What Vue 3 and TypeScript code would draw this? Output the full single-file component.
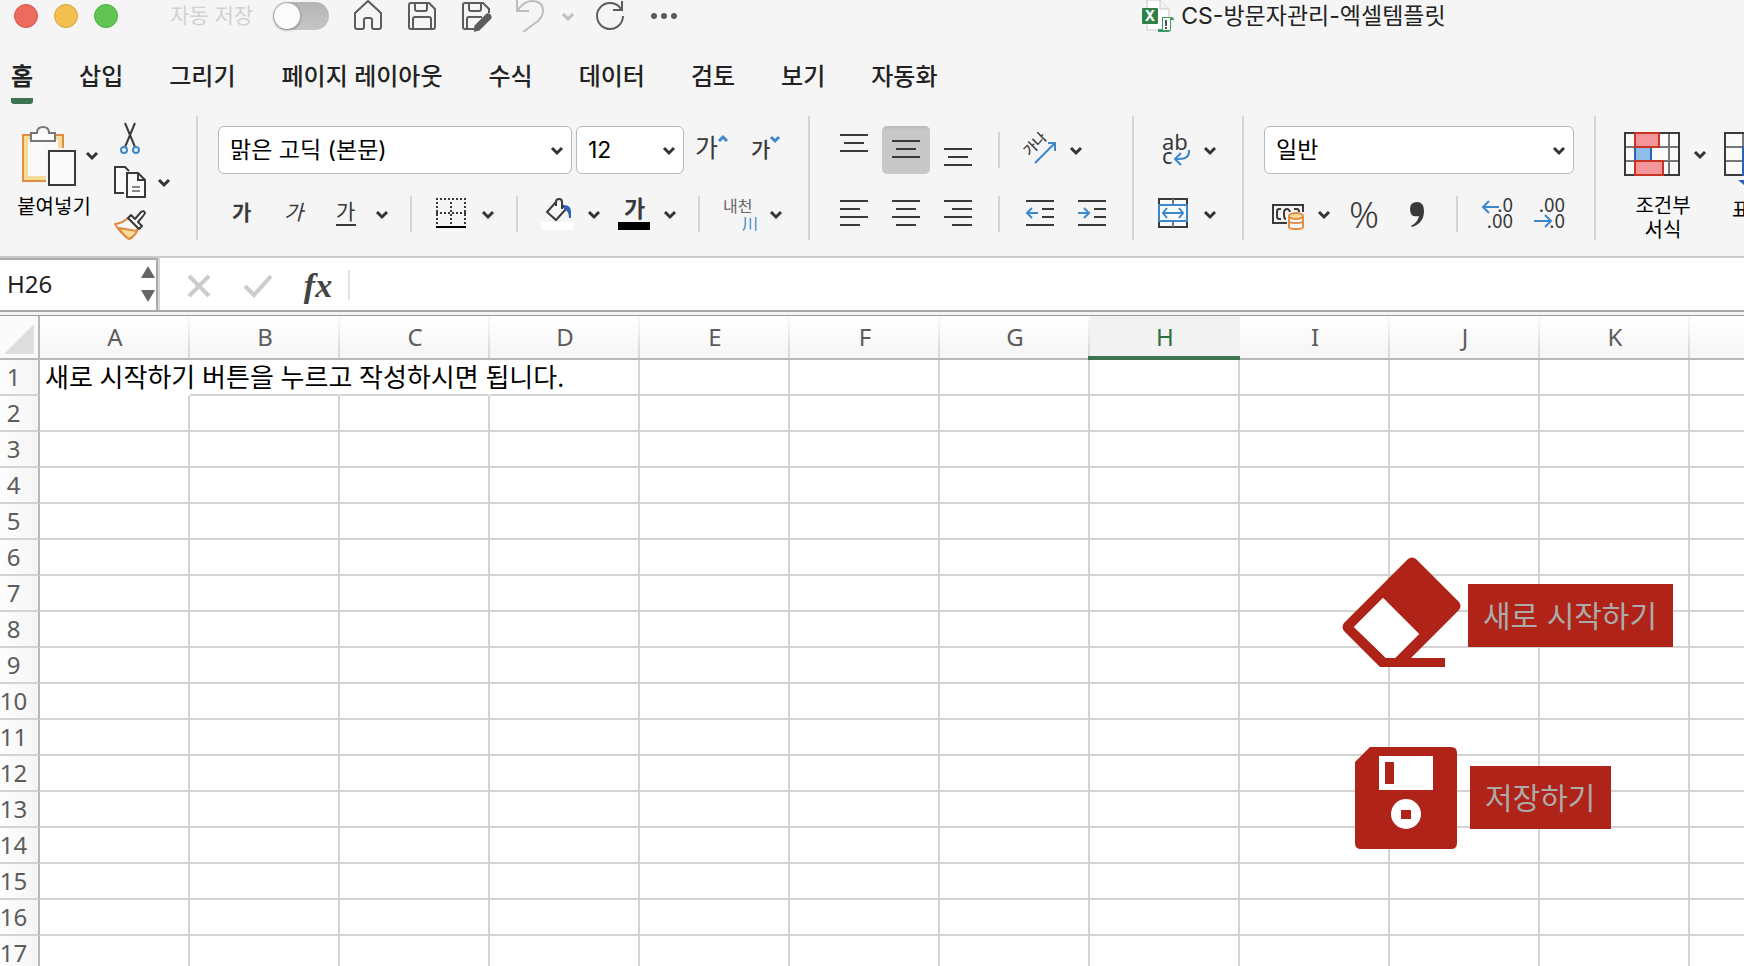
<script setup lang="ts">
import { ref } from 'vue'

interface Column {
  id: number
  label: string
}

const tabs = ['홈', '삽입', '그리기', '페이지 레이아웃', '수식', '데이터', '검토', '보기', '자동화']
const activeTab = ref('홈')
const autoSave = ref(false)
const font = ref('맑은 고딕 (본문)')
const fontSize = ref('12')
const numberFormat = ref('일반')
const cellName = ref('H26')
const formula = ref('')

const columns: Column[] = [...'ABCDEFGHIJK', ''].map((label, id) => ({ id, label }))
const rowCount = 17
const selectedColumn = 'H'
const firstCell = '새로 시작하기 버튼을 누르고 작성하시면 됩니다.'
</script>

<template>
  <div class="app">
    <header class="titlebar">
      <div class="title-tools">
        <div class="lights">
          <button class="light red" aria-label="닫기"></button>
          <button class="light yellow" aria-label="최소화"></button>
          <button class="light green" aria-label="확대"></button>
        </div>
        <label class="autosave">
          <span>자동 저장</span>
          <input v-model="autoSave" type="checkbox" class="toggle" />
        </label>
        <div class="quick">
          <button class="quick-btn" aria-label="홈 화면">
            <svg viewBox="0 0 32 32"><path d="M3 13 16 1l13 12v14q0 2-2 2h-5q-2 0-2-2v-7q0-2-2-2h-4q-2 0-2 2v7q0 2-2 2H5q-2 0-2-2z" /></svg>
          </button>
          <button class="quick-btn" aria-label="저장">
            <svg viewBox="0 0 32 32"><path d="M5 3h18l6 6v18q0 2-2 2H5q-2 0-2-2V5q0-2 2-2zM9 3v6q0 2 2 2h8q2 0 2-2V3M7 29V19q0-2 2-2h14q2 0 2 2v10" /></svg>
          </button>
          <button class="quick-btn" aria-label="다른 이름으로 저장">
            <svg viewBox="0 0 32 32">
              <path d="M15 29H5q-2 0-2-2V5q0-2 2-2h18l6 6v4M9 3v6q0 2 2 2h8q2 0 2-2V3M7 29V19q0-2 2-2h13" />
              <path d="M28 17 18 27" stroke-width="7" stroke-linecap="round" /><path d="m14 32 1-7 5 5z" class="solid" />
            </svg>
          </button>
          <div class="undo">
            <button class="quick-btn faded" aria-label="실행 취소">
              <svg viewBox="0 0 32 32"><path d="M3 0v11h12M3 11Q10 1 18 1q11 0 11 10 0 5-5 10L9 32" /></svg>
            </button>
            <button class="quick-more faded" aria-label="실행 취소 목록">
              <svg viewBox="0 0 16 32"><path d="m3 14 5 5 5-5" stroke-width="3" /></svg>
            </button>
          </div>
          <button class="quick-btn" aria-label="다시 실행">
            <svg viewBox="0 0 32 32"><path d="M27 9A13 13 0 1 0 29 16M28 1v9h-9" /></svg>
          </button>
          <button class="quick-btn" aria-label="더 보기">
            <svg viewBox="0 0 32 32"><g class="solid"><circle cx="6" cy="16" r="3" /><circle cx="16" cy="16" r="3" /><circle cx="26" cy="16" r="3" /></g></svg>
          </button>
        </div>
      </div>
      <h1 class="doc-title">
        <svg class="doc-icon" viewBox="0 0 32 32" aria-hidden="true">
          <path d="M5 0h13l9 9v21H5z" fill="#fff" stroke="#c9c9c9" />
          <path d="M18 0v9h9" fill="#f2f2f2" stroke="#c9c9c9" />
          <rect y="8" width="16" height="16" rx="1" fill="#2f8149" />
          <text x="8" y="21" text-anchor="middle" class="doc-x">X</text>
          <path d="M20 17h9q3 0 3 3h-3v9q0 3-3 3H16v-3h4z" fill="#3c9a62" />
          <path d="M21 18h7v12h-7z" fill="#fff" /><path d="M24 20v6M24 27v2" stroke="#555" stroke-width="2" />
        </svg>
        CS-방문자관리-엑셀템플릿
      </h1>
    </header>

    <nav class="tabs">
      <button v-for="tab in tabs" :key="tab" class="tab" :class="{ active: tab === activeTab }" @click="activeTab = tab">{{ tab }}</button>
    </nav>

    <section class="ribbon">
      <div class="group clipboard">
        <div class="paste">
          <div class="big-icon">
            <button class="plain" aria-labelledby="paste-label">
              <svg width="60" height="66" viewBox="0 0 60 66">
                <path d="M3 11h40v46H3z" fill="#fafafa" stroke="#e08c42" stroke-width="2" />
                <path d="M6 14h34v40H6z" fill="none" stroke="#f5dd99" stroke-width="4" />
                <path d="M26 24h34v42H26z" fill="#f5f5f5" />
                <path d="M11 9h6q0-6 6-6t6 6h6v8H11z" fill="#fafafa" stroke="#777" stroke-width="2" />
                <path d="M29 27h26v34H29z" fill="#fafafa" stroke="#3a3a3a" stroke-width="2" />
              </svg>
            </button>
            <button class="more short" aria-label="붙여넣기 옵션"><svg viewBox="0 0 24 48"><path d="m7 20 5 5 5-5" /></svg></button>
          </div>
          <span id="paste-label" class="caption">붙여넣기</span>
        </div>
        <div class="clip-tools">
          <button class="plain" aria-label="잘라내기">
            <svg width="32" height="32" viewBox="0 0 32 32" fill="none">
              <path d="m11 1 10 24M21 1 11 25" stroke="#3a3a3a" stroke-width="2" />
              <circle cx="10" cy="28" r="3" stroke="#3d88cd" stroke-width="2" /><circle cx="22" cy="28" r="3" stroke="#3d88cd" stroke-width="2" />
            </svg>
          </button>
          <div class="copy">
            <button class="plain" aria-label="복사">
              <svg width="32" height="32" viewBox="0 0 32 32" fill="none" stroke="#3a3a3a" stroke-width="2">
                <path d="M10 27H1V1h10l4 4" fill="#fafafa" /><path d="M13 7h11l7 7v17H13z" fill="#fafafa" /><path d="M24 7v7h7" />
                <path d="M18 21h8M18 25h8" stroke="#888" />
              </svg>
            </button>
            <button class="more short" aria-label="복사 옵션"><svg viewBox="0 0 24 48"><path d="m7 22 5 5 5-5" /></svg></button>
          </div>
          <button class="plain" aria-label="서식 복사">
            <svg width="32" height="32" viewBox="0 0 32 32" fill="none" stroke-linejoin="round">
              <path d="M1 14Q9 13 14 8l10 10q-2 7-9 11Q7 24 1 14z" fill="#fafafa" stroke="#e08c42" stroke-width="2" />
              <path d="m5 18 18 3q-3 6-8 8-6-4-10-11z" fill="#f5dd99" stroke="#e08c42" stroke-width="2" />
              <path d="m14 8 3-3 4 4 6-7q3-2 4 1 0 1-7 9l4 4-3 3z" fill="#fafafa" stroke="#3a3a3a" stroke-width="2" />
            </svg>
          </button>
        </div>
      </div>

      <div class="group rows">
        <div class="row">
          <label class="select font-select">
            <select v-model="font" aria-label="글꼴"><option>맑은 고딕 (본문)</option></select>
            <svg viewBox="0 0 24 48"><path d="m7 22 5 5 5-5" /></svg>
          </label>
          <label class="select size-select">
            <select v-model="fontSize" aria-label="글꼴 크기"><option>12</option></select>
            <svg viewBox="0 0 24 48"><path d="m7 22 5 5 5-5" /></svg>
          </label>
          <button class="tool" aria-label="글꼴 크게">
            <svg viewBox="0 0 48 48"><text x="7" y="31" class="g24">가</text><path class="blue thick" d="m31 15 4-4 4 4" /></svg>
          </button>
          <button class="tool" aria-label="글꼴 작게">
            <svg viewBox="0 0 48 48"><text x="11" y="31" class="g20 medium">가</text><path class="blue thick" d="m31 11 4 4 4-4" /></svg>
          </button>
        </div>
        <div class="row">
          <button class="tool" aria-label="굵게"><svg viewBox="0 0 48 48"><text x="14" y="30" class="g20 bold">가</text></svg></button>
          <button class="tool" aria-label="기울임꼴"><svg viewBox="0 0 48 48"><text x="14" y="30" class="g20 italic">가</text></svg></button>
          <div class="split">
            <button class="tool" aria-label="밑줄"><svg viewBox="0 0 48 48"><text x="14" y="29" class="g20">가</text><path class="ink" d="M14 35h20" /></svg></button>
            <button class="more" aria-label="밑줄 옵션"><svg viewBox="0 0 24 48"><path d="m7 22 5 5 5-5" /></svg></button>
          </div>
          <i class="sep"></i>
          <div class="split">
            <button class="tool" aria-label="테두리">
              <svg viewBox="0 0 48 48"><path class="ink" stroke-dasharray="2 2" d="M8 9h30M8 23h30M9 12v24M23 12v24M37 12v24" /><path d="M8 37h30" stroke="#000" stroke-width="2" /></svg>
            </button>
            <button class="more" aria-label="테두리 옵션"><svg viewBox="0 0 24 48"><path d="m7 22 5 5 5-5" /></svg></button>
          </div>
          <i class="sep"></i>
          <div class="split">
            <button class="tool" aria-label="채우기 색">
              <svg viewBox="0 0 48 48">
                <path d="M8 32h32v8H8z" fill="#fff" /><path class="ink" d="M22 12 13 22l9 8 10-11-4-4M22 16v-4q0-3 3-3t3 3v7" />
                <path d="M30 15q7 0 7 7v6h-2q0-7-5-9z" fill="#2a63b4" />
              </svg>
            </button>
            <button class="more" aria-label="채우기 색 옵션"><svg viewBox="0 0 24 48"><path d="m7 22 5 5 5-5" /></svg></button>
          </div>
          <div class="split">
            <button class="tool" aria-label="글꼴 색"><svg viewBox="0 0 48 48"><path d="M8 32h32v8H8z" /><text x="14" y="27" class="g22 bold">가</text></svg></button>
            <button class="more" aria-label="글꼴 색 옵션"><svg viewBox="0 0 24 48"><path d="m7 22 5 5 5-5" /></svg></button>
          </div>
          <i class="sep"></i>
          <div class="split">
            <button class="tool" aria-label="윗주">
              <svg viewBox="0 0 48 48"><text x="7" y="22" class="g16 soft">내천</text><text x="26" y="39" class="g16 blue-text">川</text></svg>
            </button>
            <button class="more" aria-label="윗주 옵션"><svg viewBox="0 0 24 48"><path d="m7 22 5 5 5-5" /></svg></button>
          </div>
        </div>
      </div>

      <div class="group rows align">
        <div class="row">
          <button class="tool" aria-label="위쪽 맞춤"><svg viewBox="0 0 48 48"><path class="ink" d="M10 9h28M14 17h20M10 25h28" /></svg></button>
          <button class="tool pressed" aria-label="가운데 맞춤" aria-pressed="true"><svg viewBox="0 0 48 48"><path class="ink" d="M10 15h28M14 23h20M10 31h28" /></svg></button>
          <button class="tool" aria-label="아래쪽 맞춤"><svg viewBox="0 0 48 48"><path class="ink" d="M10 23h28M14 31h20M10 39h28" /></svg></button>
          <i class="sep"></i>
          <div class="split">
            <button class="tool" aria-label="방향">
              <svg viewBox="0 0 48 48"><text x="19" y="23" text-anchor="middle" class="g14 medium" transform="rotate(-45 19 18)">가나</text><path class="blue" d="m19 37 20-20M32 17h7v8" /></svg>
            </button>
            <button class="more" aria-label="방향 옵션"><svg viewBox="0 0 24 48"><path d="m7 22 5 5 5-5" /></svg></button>
          </div>
        </div>
        <div class="row">
          <button class="tool" aria-label="왼쪽 맞춤"><svg viewBox="0 0 48 48"><path class="ink" d="M10 11h28M10 19h20M10 27h28M10 35h20" /></svg></button>
          <button class="tool" aria-label="텍스트 가운데 맞춤"><svg viewBox="0 0 48 48"><path class="ink" d="M10 11h28M14 19h20M10 27h28M14 35h20" /></svg></button>
          <button class="tool" aria-label="오른쪽 맞춤"><svg viewBox="0 0 48 48"><path class="ink" d="M10 11h28M18 19h20M10 27h28M18 35h20" /></svg></button>
          <i class="sep"></i>
          <button class="tool" aria-label="내어쓰기"><svg viewBox="0 0 48 48"><path class="ink" d="M10 11h28M26 19h12M26 27h12M10 35h28" /><path class="blue" d="M11 23h11M16 18l-5 5 5 5" /></svg></button>
          <button class="tool" aria-label="들여쓰기"><svg viewBox="0 0 48 48"><path class="ink" d="M10 11h28M26 19h12M26 27h12M10 35h28" /><path class="blue" d="M10 23h11M16 18l5 5-5 5" /></svg></button>
        </div>
      </div>

      <div class="group rows wrap">
        <div class="row">
          <div class="split">
            <button class="tool" aria-label="텍스트 줄 바꿈">
              <svg viewBox="0 0 48 48"><text x="12" y="24" class="latin">ab</text><text x="12" y="38" class="latin">c</text><path class="blue" d="M39 24q1 9-10 9h-4M31 27l-6 6 6 6" /></svg>
            </button>
            <button class="more" aria-label="줄 바꿈 옵션"><svg viewBox="0 0 24 48"><path d="m7 22 5 5 5-5" /></svg></button>
          </div>
        </div>
        <div class="row">
          <div class="split">
            <button class="tool" aria-label="병합하고 가운데 맞춤">
              <svg viewBox="0 0 48 48">
                <path d="M9 9h28v28H9z" fill="#fafafa" stroke="#3a3a3a" stroke-width="2" /><path d="M23 9v28" stroke="#777" stroke-width="2" />
                <path d="M9 15h28v16H9z" fill="#fafafa" stroke="#3d88cd" stroke-width="2" /><path class="blue" d="M13 23h20M17 18l-4 5 4 5M29 18l4 5-4 5" />
              </svg>
            </button>
            <button class="more" aria-label="병합 옵션"><svg viewBox="0 0 24 48"><path d="m7 22 5 5 5-5" /></svg></button>
          </div>
        </div>
      </div>

      <div class="group rows">
        <div class="row">
          <label class="select number-select">
            <select v-model="numberFormat" aria-label="표시 형식"><option>일반</option></select>
            <svg viewBox="0 0 24 48"><path d="m7 22 5 5 5-5" /></svg>
          </label>
        </div>
        <div class="row">
          <div class="split">
            <button class="tool" aria-label="통화 형식">
              <svg viewBox="0 0 48 48">
                <path class="ink" d="M9 15h30v18H9z" /><path class="ink" d="M17 19h-2q-2 0-2 3v4q0 3 2 3h2M22 29q-2 0-2-4v-2q0-4 3-4 2 0 3 3M30 19h3q2 0 2 3" />
                <path d="M23 22h19v20H23z" fill="#f5f5f5" />
                <path d="M25 26v11q0 2 7 2t7-2V26" fill="#fafafa" stroke="#e08c42" stroke-width="2" /><ellipse cx="32" cy="26" rx="7" ry="3" fill="#f5dd99" stroke="#e08c42" stroke-width="2" />
                <path d="M25 31q0 2 7 2t7-2" fill="none" stroke="#e08c42" stroke-width="2" />
              </svg>
            </button>
            <button class="more" aria-label="통화 옵션"><svg viewBox="0 0 24 48"><path d="m7 22 5 5 5-5" /></svg></button>
          </div>
          <button class="tool" aria-label="백분율"><svg viewBox="0 0 48 48"><text x="24" y="38" text-anchor="middle" class="percent">%</text></svg></button>
          <button class="tool" aria-label="쉼표 스타일">
            <svg viewBox="0 0 48 48"><path d="M25 12q7 0 7 9 0 12-12 16l-1-1q7-4 8-10-9 2-9-7 0-7 7-7z" fill="#3a3a3a" /></svg>
          </button>
          <i class="sep"></i>
          <button class="tool" aria-label="자릿수 늘림">
            <svg viewBox="0 0 48 48"><text x="39" y="22" text-anchor="end" class="digits">.0</text><text x="39" y="38" text-anchor="end" class="digits">.00</text><path class="blue" d="M9 17h16M15 11l-6 6 6 6" /></svg>
          </button>
          <button class="tool" aria-label="자릿수 줄임">
            <svg viewBox="0 0 48 48"><text x="39" y="22" text-anchor="end" class="digits">.00</text><text x="39" y="38" text-anchor="end" class="digits">.0</text><path class="blue" d="M8 31h17M19 25l6 6-6 6" /></svg>
          </button>
        </div>
      </div>

      <div class="group styles">
        <div class="style-item">
          <div class="big-icon">
            <button class="plain" aria-labelledby="cond-label">
              <svg width="56" height="54" viewBox="0 0 56 54">
                <path d="M1 1h54v42H1z" fill="#fafafa" /><path d="M1 15h54M1 29h54M11 1v42M45 1v42" stroke="#777" stroke-width="2" />
                <path d="M1 1h54v42H1z" fill="none" stroke="#3a3a3a" stroke-width="2" />
                <path d="M11 15h16v14H11z" fill="#8fbce8" /><path d="M11 15v14M27 15v14" stroke="#2a63b4" stroke-width="2" />
                <path d="M11 1h24v14H11zM11 29h28v14H11z" fill="#f3959a" stroke="#c93423" stroke-width="2" />
              </svg>
            </button>
            <button class="more short" aria-label="조건부 서식 옵션"><svg viewBox="0 0 24 48"><path d="m7 22 5 5 5-5" /></svg></button>
          </div>
          <span id="cond-label" class="caption">조건부<br />서식</span>
        </div>
        <div class="style-item">
          <button class="plain" aria-labelledby="table-label">
            <svg width="56" height="54" viewBox="0 0 56 54">
              <path d="M1 1h54v42H1z" fill="#fafafa" /><path d="M1 15h54M1 29h54M19 1v42" stroke="#777" stroke-width="2" />
              <path d="M1 1h54v42H1z" fill="none" stroke="#3a3a3a" stroke-width="2" /><path d="M19 15h36v28H19z" fill="#8fbce8" stroke="#2a63b4" stroke-width="2" />
              <path d="M14 48h12v5h-6z" fill="#2a63b4" />
            </svg>
          </button>
          <span id="table-label" class="caption indent">표</span>
        </div>
      </div>
    </section>

    <section class="formula-bar">
      <div class="name-box">
        <input v-model="cellName" aria-label="이름 상자" />
        <svg width="16" height="36" viewBox="0 0 16 36" aria-hidden="true"><path d="m8 0 7 12H1zM8 36l7-12H1z" fill="#666" /></svg>
      </div>
      <div class="formula-actions">
        <button class="plain" aria-label="취소"><svg width="30" height="30" viewBox="0 0 30 30"><path d="m5 6 20 20M25 6 5 26" stroke="#ccc" stroke-width="4" /></svg></button>
        <button class="plain" aria-label="입력"><svg width="30" height="30" viewBox="0 0 30 30"><path d="m3 16 9 9L29 6" fill="none" stroke="#ccc" stroke-width="4" /></svg></button>
        <button class="plain fx" aria-label="함수 삽입">fx</button>
      </div>
      <input v-model="formula" class="formula-input" aria-label="수식 입력줄" />
    </section>

    <main class="sheet">
      <table>
        <colgroup>
          <col class="row-col" />
          <col v-for="c in columns" :key="c.id" :class="{ cell: c.label }" />
        </colgroup>
        <thead>
          <tr>
            <th class="corner"><svg width="30" height="30" viewBox="0 0 30 30" aria-hidden="true"><path d="M30 0v30H0z" fill="#dedede" /></svg></th>
            <th v-for="c in columns" :key="c.id" scope="col" :class="{ selected: c.label === selectedColumn }">{{ c.label }}</th>
          </tr>
        </thead>
        <tbody>
          <tr v-for="r in rowCount" :key="r">
            <th scope="row"><span>{{ r }}</span></th>
            <td v-for="c in columns" :key="c.id" :class="{ spill: r === 1 && c.id < 3, first: r === 1 && c.id === 0 }">
              <template v-if="r === 1 && c.id === 0">{{ firstCell }}</template>
            </td>
          </tr>
        </tbody>
      </table>
      <svg class="shape eraser" viewBox="0 0 120 112" aria-hidden="true">
        <path fill="#af2318" fill-rule="evenodd" d="M66 2q4-3 8 0l43 43q3 4 0 8L69 101h34v9H38L2 74q-3-4 0-8zM41 41 12 70l32 31h9l24-24z" />
        <path fill="#fff" d="m41 41-29 29 32 31h9l24-24z" />
      </svg>
      <button class="shape macro restart">새로 시작하기</button>
      <svg class="shape floppy" viewBox="0 0 102 102" aria-hidden="true">
        <path fill="#af2318" d="M15 0h81q6 0 6 6v90q0 6-6 6H6q-6 0-6-6V15z" />
        <path fill="#fff" d="M24 9h54v34H24z" /><path fill="#af2318" d="M30 15h9v22h-9z" />
        <circle cx="51" cy="67" r="15" fill="#fff" /><path fill="#af2318" d="M46 63h10v9H46z" />
      </svg>
      <button class="shape macro save">저장하기</button>
    </main>
  </div>
</template>

<style>
body {
  margin: 0;
  background: #f5f5f5;
}
</style>

<style scoped>
* {
  box-sizing: border-box;
}
.app {
  height: 100vh;
  overflow: hidden;
  display: flex;
  flex-direction: column;
  background: #f5f5f5;
  color: #222;
  font-family: Inter, 'Noto Sans CJK KR', sans-serif;
}
button,
input,
select {
  font: inherit;
  color: inherit;
  border: 0;
  margin: 0;
  padding: 0;
  background: none;
}
svg {
  display: block;
}

/* Title bar */
.titlebar {
  display: flex;
  height: 32px;
  align-items: center;
}
.title-tools {
  flex: 0 0 65.5%;
  display: flex;
  align-items: center;
  padding-left: 14px;
}
.lights {
  display: flex;
  gap: 16px;
  margin-right: 52px;
}
.light {
  width: 24px;
  height: 24px;
  border-radius: 50%;
}
.red {
  background: #ec6a5e;
  border: 1px solid #d5574c;
}
.yellow {
  background: #f4bf4f;
  border: 1px solid #d8a23c;
}
.green {
  background: #61c554;
  border: 1px solid #4fa943;
}
.autosave {
  display: flex;
  align-items: center;
  gap: 20px;
  font-size: 21px;
  line-height: 28px;
  color: #d2d2d2;
  white-space: nowrap;
}
.toggle {
  appearance: none;
  width: 56px;
  height: 28px;
  border-radius: 14px;
  background: linear-gradient(#b4b4b4, #c6c6c6);
}
.toggle::before {
  content: '';
  display: block;
  width: 26px;
  height: 26px;
  margin: 1px;
  border-radius: 50%;
  background: #fbfbfb;
  box-shadow: 0 1px 3px rgba(0, 0, 0, 0.4);
}
.quick {
  display: flex;
  align-items: center;
  gap: 22px;
  margin-left: 23px;
}
.quick-btn {
  width: 32px;
  height: 32px;
}
.quick-more {
  width: 16px;
  height: 32px;
}
.undo {
  display: flex;
  gap: 14px;
  margin-right: -4px;
}
.quick svg {
  fill: none;
  stroke: #5c5c5c;
  stroke-width: 2;
}
.quick .faded svg {
  stroke: #bdbdbd;
}
.quick .solid {
  fill: #5c5c5c;
  stroke: none;
}
.doc-title {
  display: flex;
  align-items: center;
  gap: 7px;
  margin: 0;
  font-size: 23px;
  line-height: 32px;
  font-weight: 400;
  white-space: nowrap;
}
.doc-icon {
  width: 32px;
  height: 32px;
}
.doc-x {
  font: bold 14px Inter, sans-serif;
  fill: #fff;
}

/* Tabs */
.tabs {
  display: flex;
  gap: 46px;
  padding: 24px 11px 0;
}
.tab {
  height: 48px;
  padding-bottom: 0;
  border-bottom: 6px solid transparent;
  font-size: 24px;
  line-height: 34px;
  font-weight: 500;
  white-space: nowrap;
}
.tab.active {
  font-weight: 700;
  background: linear-gradient(#3c7350, #3c7350) bottom / 100% 6px no-repeat border-box;
  border-radius: 3px;
}

/* Ribbon */
.ribbon {
  display: flex;
  flex-shrink: 0;
  padding: 12px 0 16px;
  border-bottom: 2px solid #cacaca;
  overflow: hidden;
}
.group {
  flex-shrink: 0;
  height: 124px;
  border-right: 2px solid #d4d4d4;
  padding: 10px 20px 0;
}
.group:last-child {
  border: 0;
}
.rows {
  display: flex;
  flex-direction: column;
  gap: 16px;
}
.row {
  display: flex;
  gap: 4px;
}
.split {
  display: flex;
}
.align {
  padding-right: 16px;
}
.wrap {
  padding-left: 16px;
}
.tool {
  width: 48px;
  height: 48px;
  border-radius: 6px;
}
.tool svg {
  overflow: visible;
}
.pressed {
  background: linear-gradient(#bababa, #c8c8c8 10%);
  border-radius: 5px;
}
.more {
  width: 24px;
  height: 48px;
}
.short {
  height: 32px;
  display: flex;
  align-items: center;
}
.short svg {
  flex: 0 0 24px;
  height: 48px;
}
.more path,
.select path {
  fill: none;
  stroke: #333;
  stroke-width: 3;
}
.sep {
  width: 2px;
  height: 36px;
  margin: 6px 12px;
  background: #d4d4d4;
}
.ink {
  fill: none;
  stroke: #3a3a3a;
  stroke-width: 2;
}
.blue {
  fill: none;
  stroke: #3d88cd;
  stroke-width: 2;
}
.thick {
  stroke-width: 3;
}
text {
  fill: #3a3a3a;
  font-family: 'Noto Sans CJK KR', sans-serif;
}
.g14 {
  font-size: 14px;
}
.g16 {
  font-size: 16px;
}
.g20 {
  font-size: 21px;
}
.g22 {
  font-size: 23px;
}
.g24 {
  font-size: 25px;
}
.medium {
  font-weight: 500;
}
.bold {
  font-weight: 700;
}
.italic {
  font-style: italic;
}
.soft {
  fill: #666;
}
.blue-text {
  fill: #3d88cd;
}
.latin {
  font: 22px 'Noto Sans', sans-serif;
}
.digits {
  font-size: 19px;
}
.percent {
  font: 300 37px 'Noto Sans', sans-serif;
}
.select {
  display: grid;
  height: 48px;
}
.select select {
  grid-area: 1 / 1;
  appearance: none;
  width: 100%;
  padding: 0 30px 0 11px;
  border: 1px solid #b9b9b9;
  border-radius: 6px;
  background: #fff;
  color: #000;
  font-size: 23px;
  font-weight: 400;
}
.select svg {
  grid-area: 1 / 1;
  justify-self: end;
  width: 24px;
  height: 48px;
  margin-right: 3px;
  pointer-events: none;
}
.font-select {
  width: 354px;
}
.size-select {
  width: 108px;
}
.number-select {
  width: 310px;
}
.clipboard {
  display: flex;
  gap: 10px;
  padding: 6px 20px 0 16px;
}
.paste {
  width: 88px;
  padding-top: 2px;
}
.big-icon {
  display: flex;
  align-items: center;
}
.paste .big-icon {
  padding-left: 4px;
}
.caption {
  display: block;
  font-size: 20px;
  line-height: 24px;
  color: #000;
  text-align: center;
  white-space: nowrap;
}
.paste .caption {
  width: 76px;
  padding-top: 5px;
}
.clip-tools {
  display: flex;
  flex-direction: column;
  gap: 12px;
}
.clip-tools .plain {
  width: 32px;
}
.copy {
  display: flex;
  gap: 6px;
}
.styles {
  display: flex;
  gap: 12px;
  padding: 16px 0 0 28px;
}
.style-item .big-icon {
  gap: 8px;
}
.style-item .short {
  height: 46px;
  padding-bottom: 10px;
}
.style-item .caption {
  padding-top: 8px;
  padding-right: 10px;
}
.style-item .indent {
  text-align: left;
  padding-left: 8px;
}

/* Formula bar */
.formula-bar {
  display: flex;
  flex-shrink: 0;
  height: 54px;
  background: #fff;
  border-bottom: 2px solid #a8a8a8;
}
.name-box {
  display: flex;
  align-items: center;
  width: 158px;
  border: solid #ababab;
  border-width: 2px 2px 0 0;
  padding: 0 0 2px 7px;
  background: #fff;
  box-shadow: 2px 0 0 #d6d6d6;
}
.name-box input {
  flex: 1;
  min-width: 0;
  font-family: 'Noto Sans', sans-serif;
  font-size: 24px;
  line-height: 32px;
}
.formula-actions {
  display: flex;
  align-items: center;
  gap: 28px;
  margin: 12px 0 10px;
  padding-left: 26px;
  padding-right: 14px;
  border-right: 2px solid #e2e2e2;
}
.fx {
  width: 34px;
  padding: 2px 0 0 2px;
  font: italic bold 34px/30px 'Liberation Serif', serif;
  color: #444;
}
.formula-input {
  flex: 1;
  padding: 0 14px;
  font-size: 23px;
}

/* Sheet */
.sheet {
  position: relative;
  flex: 1;
  min-height: 0;
  overflow: hidden;
  margin-top: 3px;
  border-top: 1px solid #999;
  background: #fff;
}
table {
  width: 100%;
  table-layout: fixed;
  border-collapse: separate;
  border-spacing: 0;
  font-family: 'Noto Sans', 'Noto Sans CJK KR', sans-serif;
}
.row-col {
  width: 40px;
}
.cell {
  width: 150px;
}
th,
td {
  padding: 0;
  height: 36px;
  line-height: 34px;
  font-weight: 400;
  border: 0 solid #d3d3d3;
  border-width: 0 2px 2px 0;
}
td:last-child {
  border-right-width: 0;
}
th {
  color: #5c5c5c;
  font-size: 24px;
}
thead th {
  height: 44px;
  line-height: 42px;
  border-bottom-color: #b8b8b8;
  border-right-width: 0;
  background:
    linear-gradient(#fafafa, #d6d6d6) right / 2px 100% no-repeat,
    linear-gradient(#fff, #f5f5f5);
}
thead th:last-child {
  background: linear-gradient(#fff, #f5f5f5);
}
thead .corner {
  border-right: 2px solid #b8b8b8;
  background: #fafafa;
}
.corner svg {
  margin: 4px 0 0 4px;
}
thead th.selected {
  position: relative;
  background: #f2f2f2;
  color: #2f6e45;
}
.selected::after {
  content: '';
  position: absolute;
  left: -2px;
  right: 0;
  bottom: -2px;
  height: 4px;
  background: #3c7350;
}
tbody th {
  border-right-color: #b8b8b8;
  background: linear-gradient(90deg, #fdfdfd, #f5f5f5);
  text-align: left;
}
tbody th span {
  display: flex;
  width: 27px;
  justify-content: center;
}
.spill {
  border-right-color: transparent;
}
.first {
  border-bottom-color: transparent;
  padding-left: 5px;
  font-size: 26px;
  color: #000;
  white-space: nowrap;
}
.shape {
  position: absolute;
}
.eraser {
  left: 1342px;
  top: 241px;
  width: 120px;
  height: 112px;
}
.floppy {
  left: 1355px;
  top: 431px;
  width: 102px;
  height: 102px;
}
.macro {
  height: 63px;
  padding: 0 16px 3px 15px;
  background: #af2318;
  color: #ababab;
  font-size: 30px;
  white-space: nowrap;
}
.restart {
  left: 1468px;
  top: 268px;
}
.save {
  left: 1470px;
  top: 450px;
}
</style>
